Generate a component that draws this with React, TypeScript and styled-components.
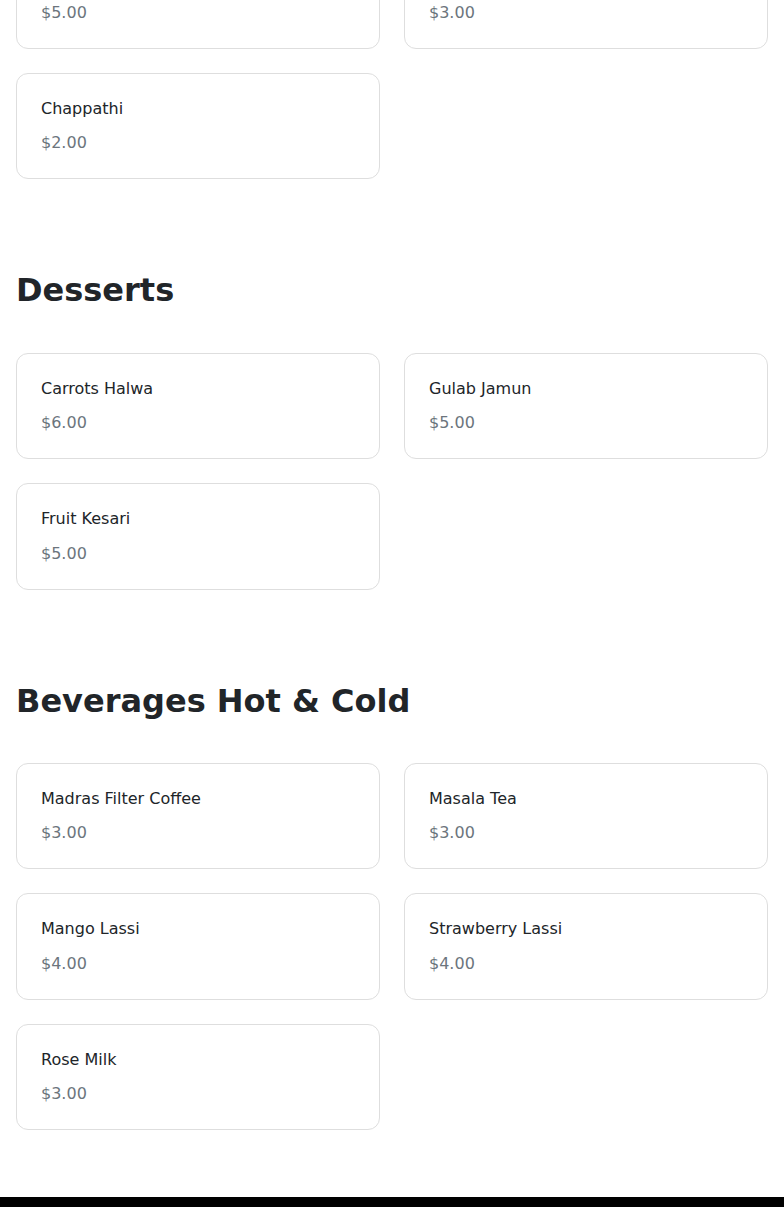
import React from 'react';
import styled, { createGlobalStyle } from 'styled-components';

const GlobalStyle = createGlobalStyle`
	html, body { margin: 0; padding: 0; background: #fff; }
	body {
		font-family: "DejaVu Sans", "Liberation Sans", sans-serif;
		color: #212529;
		-webkit-font-smoothing: antialiased;
	}
	* { box-sizing: border-box; }
`;

const Page = styled.div`
	display: flex;
	flex-direction: column;
	overflow: hidden;
`;

const Menu = styled.main`
	padding: 0 16px;
`;

const Section = styled.section<{ $first?: boolean }>`
	margin-top: ${({ $first }) => ($first ? '-57.5px' : '92px')};
`;

const Heading = styled.h2`
	margin: 0 0 43px;
	font-size: 32px;
	font-weight: 700;
	line-height: 1.2;
	color: #212529;
`;

const Grid = styled.div`
	display: grid;
	grid-template-columns: repeat(2, 1fr);
	gap: 24px;
`;

const Card = styled.div`
	border: 1px solid #dedede;
	border-radius: 12px;
	padding: 25px 24px 23px;
	background: #fff;
`;

const Name = styled.h5`
	margin: 0 0 12px;
	font-size: 16px;
	font-weight: 400;
	line-height: 20.4px;
	color: #212529;
`;

const Price = styled.p`
	margin: 0;
	font-size: 16px;
	line-height: 24px;
	color: #6c757d;
`;

const Footer = styled.footer`
	margin-top: 67px;
	height: 120px;
	background: #000;
`;

const sections = [
	{
		title: null,
		items: [
			{ name: 'Parotta', price: 5 },
			{ name: 'Idiyappam', price: 3 },
			{ name: 'Chappathi', price: 2 },
		],
	},
	{
		title: 'Desserts',
		items: [
			{ name: 'Carrots Halwa', price: 6 },
			{ name: 'Gulab Jamun', price: 5 },
			{ name: 'Fruit Kesari', price: 5 },
		],
	},
	{
		title: 'Beverages Hot & Cold',
		items: [
			{ name: 'Madras Filter Coffee', price: 3 },
			{ name: 'Masala Tea', price: 3 },
			{ name: 'Mango Lassi', price: 4 },
			{ name: 'Strawberry Lassi', price: 4 },
			{ name: 'Rose Milk', price: 3 },
		],
	},
];

const App = () => (
	<Page>
		<GlobalStyle />
		<Menu>
			{ sections.map(({ title, items }, i) => (
				<Section key={`section-${i}`} $first={ i === 0 }>
					{ title && <Heading>{ title }</Heading> }
					<Grid>
						{ items.map(({ name, price }) => (
							<Card key={`item-${name}`}>
								<Name>{ name }</Name>
								<Price>${ price.toFixed(2) }</Price>
							</Card>
						)) }
					</Grid>
				</Section>
			)) }
		</Menu>
		<Footer />
	</Page>
);

export default App;
